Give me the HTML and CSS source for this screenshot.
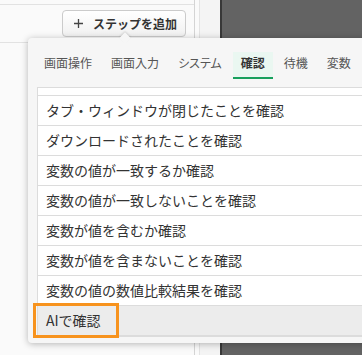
FILE: index.html
```html
<!DOCTYPE html>
<html lang="ja">
<head>
    <meta charset="UTF-8">
    <meta name="viewport" content="width=device-width, initial-scale=1.0">
    <title>ステップを追加</title>
    <link rel="stylesheet" href="styles.css">
</head>
<body>
    <div class="app">
        <section class="editor">
            <div class="editor-top"></div>
            <div class="toolbar">
                <button class="add-step">
                    <svg class="plus" width="9" height="9" viewBox="0 0 9 9"><path d="M4.5 0v9M0 4.5h9" stroke="#444" stroke-width="1.3"/></svg>
                    ステップを追加
                </button>
            </div>
        </section>
        <div class="gutter"></div>
        <div class="preview"></div>
    </div>

    <div class="step-menu">
        <div class="tabs">
            <span class="tab">画面操作</span>
            <span class="tab">画面入力</span>
            <span class="tab">システム</span>
            <span class="tab active">確認</span>
            <span class="tab">待機</span>
            <span class="tab">変数</span>
        </div>
        <ul class="step-list">
            <li class="partial"></li>
            <li>タブ・ウィンドウが閉じたことを確認</li>
            <li>ダウンロードされたことを確認</li>
            <li>変数の値が一致するか確認</li>
            <li>変数の値が一致しないことを確認</li>
            <li>変数が値を含むか確認</li>
            <li>変数が値を含まないことを確認</li>
            <li>変数の値の数値比較結果を確認</li>
            <li class="hover">AIで確認<span class="highlight"></span></li>
        </ul>
    </div>
</body>
</html>
```

FILE: styles.css
```css
body {
    margin: 0;
    font-family: "Noto Sans CJK JP", "Noto Sans", sans-serif;
    color: #333;
    background: #fafafa;
    overflow: hidden;
}
.app {
    display: flex;
    height: 355px;
}
.editor {
    width: 194px;
    border-right: 1px solid #d4d4d4;
    background: #fafafa;
}
.editor-top {
    height: 4px;
    border-bottom: 1px solid #e2e2e2;
}
.toolbar {
    height: 38px;
    border-bottom: 1px solid #e2e2e2;
    display: flex;
    justify-content: flex-end;
    align-items: flex-start;
    padding-top: 5px;
    padding-right: 8px;
    box-sizing: border-box;
}
.add-step {
    display: flex;
    align-items: center;
    height: 27px;
    padding: 0 8px 0 11px;
    border: 1px solid #cbcbcb;
    border-radius: 4px;
    background: linear-gradient(#ffffff, #f1f1f1);
    font-family: inherit;
    font-size: 12px;
    font-weight: bold;
    color: #333;
}
.plus {
    margin-right: 10px;
}
.gutter {
    width: 25px;
    background: linear-gradient(to right, #fafafa 4px, #e3e3e3 4px, #e3e3e3 5px, #f4f4f4 5px);
}
.preview {
    flex: 1;
    background: #636363;
    border-left: 2px solid #383838;
}
.step-menu {
    position: absolute;
    left: 28px;
    top: 38px;
    width: 345px;
    height: 305px;
    box-sizing: border-box;
    padding: 14px 0 7px 9px;
    background: #f6f6f6;
    border-radius: 4px;
    box-shadow: 0 1px 7px rgba(0, 0, 0, 0.28);
}
.step-menu::before {
    content: "";
    position: absolute;
    left: 93px;
    top: -4px;
    width: 8px;
    height: 8px;
    background: #f6f6f6;
    transform: rotate(45deg);
    box-shadow: -1px -1px 2px rgba(0, 0, 0, 0.12);
}
.tabs {
    display: flex;
    gap: 3px;
    margin-left: -1px;
    font-size: 12px;
    font-feature-settings: "palt";
}
.tab {
    height: 27px;
    box-sizing: border-box;
    padding: 0 8px 3px;
    line-height: 22px;
    color: #555;
    border-bottom: 2px solid transparent;
}
.tab.active {
    font-weight: bold;
    color: #333;
    background: #eaf7f1;
    border-bottom-color: #17a05d;
}
.step-list {
    list-style: none;
    margin: 8px 0 0;
    padding: 0;
    background: #fff;
    border: 1px solid #dcdcdc;
    border-right: none;
    font-size: 14px;
}
.step-list li {
    position: relative;
    height: 29px;
    line-height: 29px;
    padding-left: 8px;
    border-bottom: 1px solid #dcdcdc;
}
.step-list li.partial {
    height: 7px;
}
.step-list li.hover {
    background: #ececec;
}
.highlight {
    position: absolute;
    left: -5px;
    top: -3px;
    width: 86px;
    height: 35px;
    box-sizing: border-box;
    border: 3px solid #f7931e;
}
```
